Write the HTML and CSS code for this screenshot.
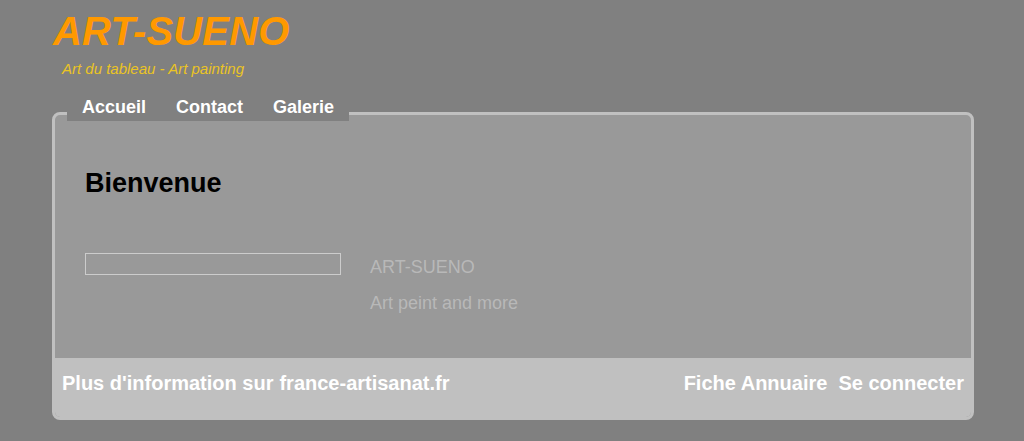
FILE: index.html
```html
<!DOCTYPE html>
<html lang="fr">
<head>
<meta charset="utf-8">
<title>ART-SUENO</title>
<link rel="stylesheet" href="styles.css">
</head>
<body>
<div class="page">
  <header class="header">
    <h1 class="site-title">ART-SUENO</h1>
    <p class="site-slogan">Art du tableau - Art painting</p>
  </header>
  <nav class="nav">
    <a class="nav-link" href="#">Accueil</a>
    <a class="nav-link" href="#">Contact</a>
    <a class="nav-link" href="#">Galerie</a>
  </nav>
  <div class="box">
    <main class="main">
      <h2 class="main-title">Bienvenue</h2>
      <div class="row">
        <div class="frame"></div>
        <div class="info">
          <p class="info-line">ART-SUENO</p>
          <p class="info-line">Art peint and more</p>
        </div>
      </div>
    </main>
    <footer class="footer">
      <div class="footer-left">
        <span>Plus d'information sur</span>
        <a class="footer-link" href="#">france-artisanat.fr</a>
      </div>
      <div class="footer-right">
        <a class="footer-link" href="#">Fiche Annuaire</a>
        <a class="footer-link" href="#">Se connecter</a>
      </div>
    </footer>
  </div>
</div>
</body>
</html>
```

FILE: styles.css
```css
html, body {
  margin: 0;
  padding: 0;
}
body {
  background: #808080;
  font-family: "Liberation Sans", Arial, sans-serif;
}
.page {
  width: 922px;
  margin-left: 52px;
}
.header {
  padding-top: 8px;
}
.site-title {
  margin: 0;
  padding-left: 1px;
  font-size: 40px;
  line-height: 46px;
  font-weight: bold;
  font-style: italic;
  letter-spacing: 0.2px;
  color: #ff9900;
}
.site-slogan {
  margin: 6px 0 0 0;
  padding-left: 10px;
  font-size: 15px;
  line-height: 18px;
  font-style: italic;
  color: #ebc424;
}
.nav {
  position: relative;
  z-index: 1;
  display: flex;
  width: max-content;
  margin: 19px 0 0 15px;
  padding-bottom: 3px;
  background: #808080;
}
.nav-link {
  padding: 0 15px;
  font-size: 18px;
  line-height: 21px;
  font-weight: bold;
  color: #ffffff;
  text-decoration: none;
}
.box {
  margin-top: -9px;
  border: 3px solid #c0c0c0;
  border-radius: 8px;
  background: #999999;
  overflow: hidden;
}
.main {
  padding: 53px 30px 37px 30px;
}
.main-title {
  margin: 0;
  font-size: 27px;
  line-height: 31px;
  font-weight: bold;
  color: #000000;
}
.row {
  display: flex;
  align-items: flex-start;
  gap: 29px;
  margin-top: 50px;
}
.frame {
  width: 254px;
  height: 20px;
  margin-top: 4px;
  border: 1px solid #cccccc;
}
.info-line {
  margin: 0;
  font-size: 18px;
  line-height: 36px;
  color: #b8b8b8;
}
.footer {
  display: flex;
  justify-content: space-between;
  padding: 14px 7px 22px 7px;
  background: #c0c0c0;
  font-size: 20px;
  line-height: 23px;
  font-weight: bold;
  color: #ffffff;
}
.footer-left {
  display: flex;
  gap: 6px;
}
.footer-right {
  display: flex;
  gap: 11px;
}
.footer-link {
  color: #ffffff;
  text-decoration: none;
}
```
